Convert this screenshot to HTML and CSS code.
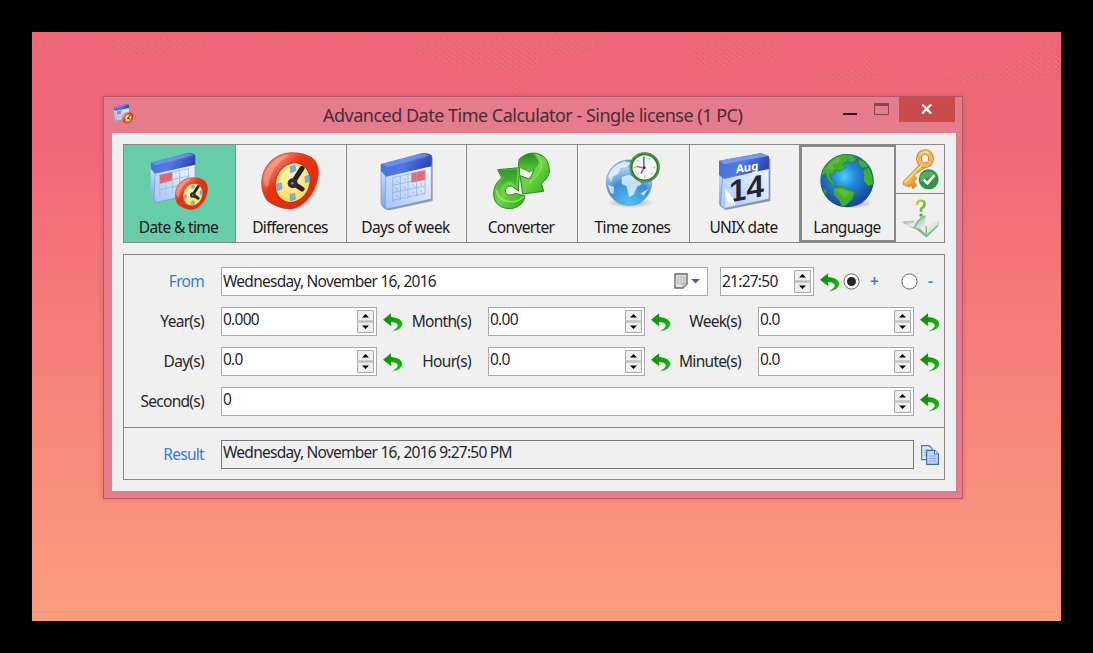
FILE: index.html
```html
<!DOCTYPE html>
<html lang="en">
<head>
<meta charset="utf-8">
<title>Advanced Date Time Calculator</title>
<link rel="stylesheet" href="styles.css">
</head>
<body>
<svg class="defs" width="0" height="0" aria-hidden="true">
  <defs>
    <linearGradient id="calTop" x1="0" y1="0" x2="1" y2="0.3"><stop offset="0" stop-color="#3d70df"/><stop offset=".55" stop-color="#5278e0"/><stop offset="1" stop-color="#2c47b4"/></linearGradient>
    <linearGradient id="calBody" x1="0" y1="1" x2="1" y2="0"><stop offset="0" stop-color="#a2c4f8"/><stop offset=".5" stop-color="#cfe0ff"/><stop offset="1" stop-color="#f4f8ff"/></linearGradient>
    <linearGradient id="calSide" x1="0" y1="0" x2="0" y2="1"><stop offset="0" stop-color="#d5e5ff"/><stop offset="1" stop-color="#7ba5ea"/></linearGradient>
    <linearGradient id="red" x1="0" y1="0" x2="1" y2="1"><stop offset="0" stop-color="#f4482c"/><stop offset=".22" stop-color="#f7795f"/><stop offset=".4" stop-color="#e83413"/><stop offset="1" stop-color="#d72a0a"/></linearGradient>
    <radialGradient id="face" cx=".4" cy=".35" r=".75"><stop offset="0" stop-color="#fff6bc"/><stop offset="1" stop-color="#fbd64d"/></radialGradient>
    <linearGradient id="green" x1="0" y1="0" x2="1" y2="1"><stop offset="0" stop-color="#3fae2d"/><stop offset=".5" stop-color="#6ed642"/><stop offset="1" stop-color="#2ba41c"/></linearGradient>
    <linearGradient id="green2" x1="0" y1="0" x2="0" y2="1"><stop offset="0" stop-color="#238d20"/><stop offset="1" stop-color="#64cb3a"/></linearGradient>
    <radialGradient id="sea" cx=".45" cy=".42" r=".6"><stop offset="0" stop-color="#50cdfb"/><stop offset=".35" stop-color="#218cdc"/><stop offset="1" stop-color="#173f93"/></radialGradient>
    <radialGradient id="ice" cx=".5" cy=".95" r=".95"><stop offset="0" stop-color="#4dc4f4"/><stop offset=".5" stop-color="#3c8cd6"/><stop offset=".8" stop-color="#a9cff0"/><stop offset="1" stop-color="#5388c9"/></radialGradient>
    <radialGradient id="shade"><stop offset="0" stop-color="#555" stop-opacity=".65"/><stop offset="1" stop-color="#999" stop-opacity="0"/></radialGradient>
    <linearGradient id="gold" x1="0" y1="0" x2="1" y2="1"><stop offset="0" stop-color="#ffd978"/><stop offset=".5" stop-color="#f5ad3d"/><stop offset="1" stop-color="#bc6d16"/></linearGradient>
    <linearGradient id="undo" x1="0" y1="0" x2="1" y2="1"><stop offset="0" stop-color="#0b8406"/><stop offset="1" stop-color="#22bd19"/></linearGradient>
    <linearGradient id="page" x1="0" y1="0" x2="1" y2="1"><stop offset="0" stop-color="#9fa69f"/><stop offset=".5" stop-color="#eceeec"/><stop offset="1" stop-color="#c9cdc9"/></linearGradient>
    <linearGradient id="quest" x1="0" y1="0" x2="1" y2="1"><stop offset="0" stop-color="#d8d33a"/><stop offset="1" stop-color="#3fae45"/></linearGradient>
    <pattern id="grain" width="7" height="5" patternUnits="userSpaceOnUse"><path d="M0 0h1v1H0zM3 1h1v1H3zM5 3h1v1H5zM1 4h2v1H1z" fill="#dd8468"/><path d="M4 4h1v1H4zM6 1h1v1H6zM2 2h1v1H2z" fill="#c75a60"/></pattern>

    <symbol id="i-clock" viewBox="478 180 186 186">
      <path d="M490 262C493 211 533 184 588 188L632 198Q655 214 657 244C659 299 622 352 576 357Q527 354 499 324Q485 303 490 262Z" fill="#8d8174" opacity=".35" transform="translate(3 3)"/>
      <path d="M486 280C486 231 522 190 576 188Q614 188 638 204Q655 219 656 246C653 300 619 351 572 357Q531 354 503 332Q487 312 486 280Z" fill="url(#red)" stroke="#b73018" stroke-width="2"/>
      <path d="M492 270Q500 213 556 195L570 198Q517 218 505 290Q495 295 492 270Z" fill="#fac1b2" opacity=".4"/>
      <ellipse cx="579" cy="278" rx="51" ry="61" transform="rotate(22 579 278)" fill="url(#face)" stroke="#b92d0c" stroke-width="3"/>
      <g fill="#7daee8" stroke="#628dc2" stroke-width="2"><path d="M572 230l14-4 2 16-15 6zM616 260l12-5 3 17-13 6zM531 283l14-4 2 17-15 6zM571 314l14-4 2 17-15 5z"/></g>
      <path d="M607 235L579 279 607 297" fill="none" stroke="#252225" stroke-width="15" stroke-linecap="round" stroke-linejoin="round"/>
      <circle cx="579" cy="280" r="15" fill="#302c31"/><circle cx="578" cy="280" r="4" fill="#888"/>
    </symbol>

    <symbol id="i-week" viewBox="106 180 186 186">
      <path d="M130 227L255 189Q276 189 276 202V330L147 358Q127 357 125 343Z" fill="#666" opacity=".6" transform="translate(3 3)"/>
      <path d="M124 225L140 255 144 357Q124 351 124 338Z" fill="url(#calSide)" stroke="#6f93d5" stroke-width="2"/>
      <path d="M139 250L275 220V327L144 357Q136 355 136 340Z" fill="url(#calBody)" stroke="#6b91d6" stroke-width="2"/>
      <path d="M124 222L248 189Q269 188 276 197V229L139 260 124 243Z" fill="url(#calTop)"/>
      <path d="M127 222L249 190 270 197 143 231Z" fill="#7ca1ef" opacity=".65"/>
      <path d="M215 249L257 240V269L215 278Z" fill="#f26668"/>
      <path d="M159 263L255 242M158 286L256 265M157 308L256 288M158 331L256 310M159 263V336M182 258V331M205 253V326M231 249V320M256 242V313" fill="none" stroke="#89a6df" stroke-width="2"/>
      <path d="M171 271l4 7M195 266l4 7M169 293l5 7M194 289l4 7M219 283l5 8M242 278l5 8M172 316l4 6M194 311l5 6M219 305l4 7M242 300l5 7" stroke="#6d91d0" stroke-width="2"/>
    </symbol>

    <symbol id="i-date" viewBox="145 180 186 186">
      <g transform="translate(153 188) scale(.88) translate(-124 -188)">
        <path d="M124 225L140 255 144 357Q124 351 124 338Z" fill="url(#calSide)"/>
        <path d="M139 250L275 220V327L144 357Q136 355 136 340Z" fill="url(#calBody)" stroke="#6b91d6" stroke-width="2"/>
        <path d="M124 222L248 189Q269 188 276 197V229L139 260 124 243Z" fill="url(#calTop)"/>
        <path d="M127 222L249 190 270 197 143 231Z" fill="#7ca1ef" opacity=".65"/>
        <path d="M155 264L197 254V284L155 294Z" fill="#f15d60"/>
        <path d="M155 264L255 242M155 290L256 267M157 314L256 291M155 264V336M176 259V331M198 255V326M223 249V320M253 242V290" fill="none" stroke="#89a6df" stroke-width="2"/>
      </g>
      <use href="#i-clock" x="222" y="258" width="106" height="106"/>
    </symbol>

    <symbol id="i-conv" viewBox="453 180 186 186">
      <path d="M541 207Q565 185 594 190Q633 201 631 246Q630 262 607 280L614 304 551 312 543 257 571 267Q593 235 579 224Q565 217 538 230Z" fill="url(#green)" stroke="#268a22" stroke-width="3" stroke-linejoin="round"/>
      <path d="M541 207Q562 190 580 191Q593 201 598 218Q584 244 571 246L538 230Z" fill="url(#green2)" stroke="#34962a" stroke-width="2"/>
      <path d="M592 193Q621 221 596 254L571 281" fill="none" stroke="#a2ef74" stroke-width="4" opacity=".6"/>
      <path d="M476 239L542 233 538 303 518 288Q498 288 499 307Q505 322 530 310L558 318Q554 348 519 356Q481 358 467 331Q455 291 488 263Z" fill="url(#green)" stroke="#268a22" stroke-width="3" stroke-linejoin="round"/>
      <path d="M479 242L535 238 532 287 512 273Q480 283 481 313Q464 291 494 263Z" fill="url(#green2)" opacity=".8"/>
      <path d="M472 300Q479 336 517 335Q535 337 555 319" fill="none" stroke="#a0ed71" stroke-width="5" opacity=".7"/>
    </symbol>

    <symbol id="i-zones" viewBox="99 180 186 186">
      <ellipse cx="184" cy="338" rx="74" ry="17" fill="url(#shade)"/>
      <circle cx="180" cy="278" r="68" fill="url(#ice)" stroke="#5d8fc9" stroke-width="2"/>
      <path d="M118 258Q125 227 166 213L188 218 172 232 154 235 147 252 132 259 126 277ZM116 284L135 291 134 311 125 310ZM158 261L179 254 205 265 218 283 204 291 194 314 180 321 173 289 158 282ZM215 310L238 296 224 318Z" fill="#f1f9ff" opacity=".75"/>
      <circle cx="227" cy="232" r="41" fill="#f4f6f4" stroke="#307b27" stroke-width="9"/>
      <circle cx="227" cy="232" r="43" fill="none" stroke="#72b663" stroke-width="2"/>
      <path d="M227 197v8M260 232h-7M227 265v-8M194 232h7M243 204l-3 6M249 253l-5-4M204 254l6-5M204 210l6 5" stroke="#b0b0b0" stroke-width="3"/>
      <path d="M224 200L225 233 216 251" fill="none" stroke="#547bc6" stroke-width="5"/><path d="M226 234L202 229" stroke="#be6b3e" stroke-width="4"/><circle cx="226" cy="233" r="4" fill="#333"/>
    </symbol>

    <symbol id="i-unix" viewBox="429 180 186 186">
      <path d="M449 225L579 190 598 203V330L464 357 449 345Z" fill="#666" opacity=".65" transform="translate(3 3)"/>
      <path d="M447 225L463 261 464 357 447 343Z" fill="url(#calSide)"/>
      <path d="M459 254L597 222V327L464 356 451 347Z" fill="url(#calBody)" stroke="#6a8fd5" stroke-width="2"/>
      <path d="M447 212L573 189 597 199V237L462 267 447 255Z" fill="url(#calTop)"/>
      <path d="M449 212L573 190 594 198 462 223Z" fill="#7999e9"/>
      <text class="month" transform="translate(498 250) skewY(-10)">Aug</text>
      <text class="day" transform="translate(477 338) skewY(-11)">14</text>
      <path d="M465 294Q483 305 497 345L466 352Z" fill="#dce8ff"/><path d="M466 302Q483 313 496 341L474 335Z" fill="#fff"/>
    </symbol>

    <symbol id="i-globe" viewBox="112 180 186 186">
      <ellipse cx="226" cy="340" rx="59" ry="16" fill="url(#shade)"/>
      <circle cx="205" cy="272" r="80" fill="url(#sea)"/>
      <path d="M132 239Q154 202 193 193L221 196 235 207 219 220 206 212 192 222 201 232 183 244 170 239 166 253 151 252 159 271 174 290 164 286 147 269 141 250 129 257ZM166 293L189 289 208 298 229 306 220 329 202 346 189 350 181 331 164 312ZM253 242L269 232Q283 250 284 282L270 289 255 274ZM238 206L257 214 270 231 250 234 240 222ZM132 291L144 304 141 318Z" fill="#45ae32" stroke="#23822b" stroke-width="2"/>
      <path d="M142 237Q159 205 189 201L179 220 163 222 164 239ZM173 298L194 297 215 309 197 325Z" fill="#6cc438" opacity=".6"/>
    </symbol>

    <symbol id="i-spin" viewBox="0 0 17 23">
      <path d="M.5.5h16v10.5H.5zM.5 12h16v10.5H.5z" fill="#efefef" stroke="#aaa"/>
      <path d="M5 7.5L8.5 4 12 7.5zM5 15.5h7L8.5 19z" fill="#050505"/>
    </symbol>
    <symbol id="i-undo" viewBox="0 0 20 19"><path d="M0 6.8L8 .2 8.2 4Q18 4.6 19.5 10.8Q18.8 16.8 9 18.4Q17 13.5 14 10.7Q12 9 8.1 9.1L8.3 13.5Z" fill="url(#undo)"/></symbol>
  </defs>
</svg>

<div class="desktop">
  <svg class="wall" viewBox="0 0 1029 70" aria-hidden="true">
    <path d="M0 9h23l-4 9-8 1H0zM78 7h97l-3 10-34 3-3 8-5 3-8-8-43-3zM225 5h40v3l-35 3-3 9zM268 7h24l-10 5zM312 6h20l-10 8zM378 7h190l-2 12-48 6-18 15-12 12 5 2-15 12 5-20-16-10-46-1-38-17zM656 14l20-9 70 2 4 22-17-1-8-8-23 12-24 5-19-3zM784 37l47 1 9-20 3 22 12 9 31 3 50-10 52-13 12-20h29v41l-70 1-60-2-60 2-50 1z" fill="url(#grain)"/>
  </svg>
  <main class="window">
    <header class="titlebar">
      <svg class="app-icon" viewBox="145 180 186 186"><use href="#i-date" x="145" y="180" width="186" height="186"/></svg>
      <h1 class="title">Advanced Date Time Calculator - Single license (1 PC)</h1>
      <div class="controls">
        <svg class="min" viewBox="0 0 14 3"><path d="M0 0h14v2H0z" fill="#30171d"/></svg>
        <svg class="max" viewBox="0 0 16 13"><path d="M.5 .5h14v11H.5z" fill="none" stroke="#824852"/><path d="M0 0h15v3H0z" fill="#824852"/></svg>
        <div class="close"><svg viewBox="0 0 12 10"><path d="M1.2 .5L10.2 9.5M10.2 .5L1.2 9.5" stroke="#fff" stroke-width="2.3"/></svg></div>
      </div>
    </header>
    <section class="content">
      <nav class="toolbar">
        <div class="tool active"><svg><use href="#i-date"/></svg><span>Date &amp; time</span></div>
        <div class="tool w111"><svg><use href="#i-clock"/></svg><span>Differences</span></div>
        <div class="tool w120"><svg><use href="#i-week"/></svg><span>Days of week</span></div>
        <div class="tool w111"><svg><use href="#i-conv"/></svg><span>Converter</span></div>
        <div class="tool"><svg><use href="#i-zones"/></svg><span>Time zones</span></div>
        <div class="tool w110"><svg><use href="#i-unix"/></svg><span>UNIX date</span></div>
        <div class="tool focus"><svg><use href="#i-globe"/></svg><span>Language</span></div>
        <div class="side">
          <div class="mini"><svg viewBox="360 177 126 126">
            <path d="M425 224L374 276 372 286 391 295 394 286 402 299 412 290 405 277 414 268 404 259 444 232Z" fill="url(#gold)" stroke="#a8702a" stroke-width="2"/>
            <ellipse cx="438" cy="209" rx="18" ry="20" fill="none" stroke="#a8702a" stroke-width="17"/><ellipse cx="438" cy="209" rx="18" ry="20" fill="none" stroke="#f3b658" stroke-width="13"/>
            <path d="M424 196Q437 182 450 194M429 228L378 280" fill="none" stroke="#ffe3a0" stroke-width="4"/>
            <circle cx="449" cy="271" r="30" fill="#309447"/><path d="M424 260Q447 235 474 260Q449 259 424 278Z" fill="#7dc97e" opacity=".5"/><path d="M434 272l11 11 21-24" fill="none" stroke="#fff" stroke-width="8"/>
          </svg></div>
          <div class="mini"><svg viewBox="360 321 126 130">
            <path d="M369 400L400 394 416 412 443 438 480 394V411L443 446 411 421 392 414Z" fill="#6cc275"/>
            <path d="M368 398Q399 388 416 411L424 422 410 416 386 411Z" fill="url(#page)"/>
            <path d="M417 413Q429 421 443 437L480 406V392Q452 402 441 412Q436 401 443 378L422 391Q410 397 407 413Z" fill="url(#page)"/>
            <path d="M440 379Q416 389 407 415" fill="none" stroke="#6cc86b" stroke-width="5"/><path d="M441 411Q444 421 442 436" fill="none" stroke="#949d95" stroke-width="4"/>
            <path d="M414 346Q413 333 426 332Q440 333 437 345Q434 354 426 358V367" fill="none" stroke="url(#quest)" stroke-width="8"/><circle cx="426" cy="377" r="5" fill="#38ac55"/>
          </svg></div>
        </div>
      </nav>

      <section class="panel">
        <div class="grid">
          <label class="blue">From</label>
          <div class="from-row">
            <div class="field date"><span>Wednesday, November 16, 2016</span>
              <svg class="picker" viewBox="0 0 27 16"><path d="M1 1h12v10l-4 4H1z" fill="#e4e4e4" stroke="#6b6970" stroke-width="1.4"/><path d="M3 4h9M3 7h9M3 10h9M4 3v9M7 3v9M10 3v8" stroke="#b4b4b4" stroke-width=".8"/><path d="M9 14.5v-3.500h3.500z" fill="#fff" stroke="#888" stroke-width=".8"/><path d="M17 6h9l-4.500 4.600z" fill="#5e5b86"/></svg></div>
            <div class="field time"><span>21:27:50</span><svg class="spin"><use href="#i-spin"/></svg></div>
            <svg class="undo"><use href="#i-undo"/></svg>
            <svg class="radio" viewBox="0 0 17 17"><circle cx="8.500" cy="8.500" r="7.600" fill="#fff" stroke="#666"/><circle cx="8.500" cy="8.500" r="4.500" fill="#252525"/></svg>
            <span class="sign plus">+</span>
            <svg class="radio" viewBox="0 0 17 17"><circle cx="8.500" cy="8.500" r="7.600" fill="#fff" stroke="#666"/></svg>
            <span class="sign minus">-</span>
          </div>

          <label>Year(s)</label><div class="field"><span>0.000</span><svg class="spin"><use href="#i-spin"/></svg></div><svg class="undo"><use href="#i-undo"/></svg>
          <label>Month(s)</label><div class="field"><span>0.00</span><svg class="spin"><use href="#i-spin"/></svg></div><svg class="undo"><use href="#i-undo"/></svg>
          <label>Week(s)</label><div class="field"><span>0.0</span><svg class="spin"><use href="#i-spin"/></svg></div><svg class="undo"><use href="#i-undo"/></svg>

          <label>Day(s)</label><div class="field"><span>0.0</span><svg class="spin"><use href="#i-spin"/></svg></div><svg class="undo"><use href="#i-undo"/></svg>
          <label>Hour(s)</label><div class="field"><span>0.0</span><svg class="spin"><use href="#i-spin"/></svg></div><svg class="undo"><use href="#i-undo"/></svg>
          <label>Minute(s)</label><div class="field"><span>0.0</span><svg class="spin"><use href="#i-spin"/></svg></div><svg class="undo"><use href="#i-undo"/></svg>

          <label>Second(s)</label><div class="field wide"><span>0</span><svg class="spin"><use href="#i-spin"/></svg></div><svg class="undo"><use href="#i-undo"/></svg>
        </div>
        <div class="result-row">
          <label class="blue">Result</label>
          <div class="field result"><span>Wednesday, November 16, 2016 9:27:50 PM</span></div>
          <svg class="copy" viewBox="0 0 18 20"><path d="M.6.6h7.500l3 3v11H.6z" fill="#dbe8ff" stroke="#5577bd" stroke-width="1.200"/><path d="M2.500 5h5M2.500 7.500h5M2.500 10h5" stroke="#9db7e5"/><path d="M5.600 5.300h8l3.800 3.800v10.200H5.600z" fill="#bed5fc" stroke="#4269b4" stroke-width="1.200"/><path d="M13.500 5.500V9h3.700" fill="#fff" stroke="#4269b4"/><path d="M8 11h7M8 13.500h7M8 16h7" stroke="#81a5df"/></svg>
        </div>
      </section>
    </section>
  </main>
</div>
</body>
</html>
```
FILE: styles.css
```css
* { box-sizing: border-box; }
body { margin: 0; width: 1093px; height: 653px; padding: 32px; background: #000; overflow: hidden; font: 15.5px/20px "Noto Sans", sans-serif; color: #26262b; }
svg { display: block; flex: none; }
.defs { position: absolute; }
.desktop { position: relative; width: 1029px; height: 589px; padding: 64px 0 0 71px; background: linear-gradient(#ee6678 0%, #ef6879 20%, #f67e7a 52%, #fa907b 80%, #fb9c7f 100%); }
.wall { position: absolute; left: 0; top: 0; width: 1029px; height: 70px; opacity: .6; }
.window { position: relative; width: 860px; height: 403px; border: 1px solid #b65566; background: #e57b8c; box-shadow: 0 0 5px rgba(110, 20, 40, .18); padding: 0 6px 7px 8px; }
.titlebar { display: flex; height: 36px; align-items: flex-start; }
.app-icon { width: 21px; height: 21px; margin: 6px 0 0 1px; }
.title { margin: 5px 0 0; padding-left: 189px; width: 702px; font-size: 18px; line-height: 26px; font-weight: 400; letter-spacing: -.5px; color: #4a2c35; white-space: nowrap; }
.controls { display: flex; margin-left: auto; align-items: flex-start; }
.min { width: 14px; height: 3px; margin: 16px 17px 0 0; }
.max { width: 16px; height: 13px; margin: 6px 9px 0 0; }
.close { display: grid; place-items: center; width: 56px; height: 25px; background: #c94b4b; margin-right: 1px; padding-bottom: 2px; }
.close svg { width: 12px; height: 10px; }
.content { width: 844px; height: 358px; padding: 11px 11px 0; background: #f0f0f0; }
.toolbar { display: flex; width: 822px; height: 99px; border: 1px solid #878787; }
.tool { width: 112px; padding-top: 5px; border-right: 1px solid #878787; display: flex; flex-direction: column; align-items: center; color: #18181b; }
.tool svg { width: 62px; height: 62px; position: relative; left: -1px; }
.tool span { margin: 5px 2px 0 0; white-space: nowrap; letter-spacing: -.65px; }
.active { background: #67cda9; }
.w111 { width: 111px; }
.w120 { width: 120px; }
.w110 { width: 110px; }
.focus { width: 96px; border: 2px solid #878787; padding-top: 3px; }
.side { width: 48px; }
.mini { display: grid; place-items: center; height: 48px; }
.mini + .mini { border-top: 1px solid #878787; height: 49px; }
.mini svg { width: 42px; height: 42px; }
.month { font: bold 34px "Noto Sans", sans-serif; fill: #fff; }
.day { font: bold 94px "Liberation Sans", sans-serif; fill: #242434; }

.panel { margin-top: 11px; width: 822px; height: 226px; border: 1px solid #878787; }
.grid { display: grid; grid-template-columns: 97px 156px 34px 77px 157px 34px 79px 156px 30px; grid-template-rows: repeat(4, 29px); row-gap: 11px; height: 173px; padding-top: 12px; border-bottom: 1px solid #878787; }
label { justify-self: end; padding-right: 17px; margin-top: 4px; white-space: nowrap; letter-spacing: -.7px; }
.blue { color: #347bd7; }
.field { display: flex; justify-content: space-between; height: 29px; border: 1px solid #aaa; background: #fff; padding: 1px 2px 0 1px; white-space: nowrap; letter-spacing: -.75px; }
.spin { width: 17px; height: 23px; }
.field .spin { margin: 1px 0 0; }
.undo { width: 20px; height: 19px; margin: 6px 0 0 6px; }
.from-row { grid-column: 2 / -1; display: flex; }
.date { width: 487px; padding-top: 3px; }
.time { width: 94px; margin-left: 12px; padding-top: 3px; }
.time .spin { margin-top: -1px; }
.picker { width: 27px; height: 16px; margin: 2px 4px 0 0; }
.radio { width: 17px; height: 17px; margin: 6px 0 0; }
.from-row .undo { margin-right: 3px; }
.sign { font-weight: 600; color: #347bd7; margin-top: 4px; }
.plus { width: 41px; padding-left: 10px; }
.minus { padding-left: 10px; }
.wide { grid-column: 2 / 9; }
.result-row { display: flex; padding-top: 12px; }
.result-row label { width: 97px; text-align: right; }
.result { width: 693px; border-color: #777; background: #f0f0f0; }
.copy { width: 18px; height: 20px; margin: 5px 0 0 7px; }
```
